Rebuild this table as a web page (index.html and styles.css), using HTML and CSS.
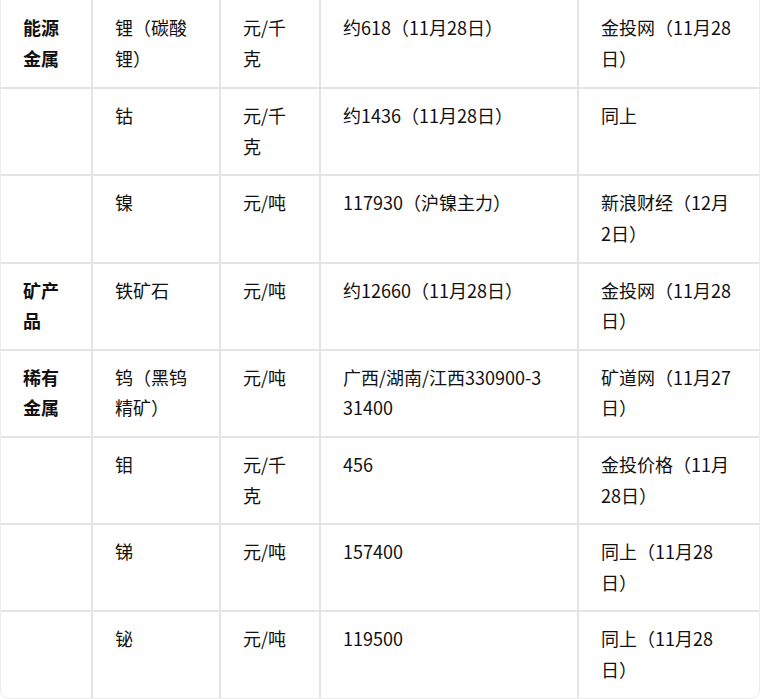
FILE: index.html
```html
<!DOCTYPE html>
<html lang="zh-CN">
<head>
<meta charset="utf-8">
<title>金属价格</title>
<link rel="stylesheet" href="styles.css">
</head>
<body>
<div class="table-wrap">
  <table class="price-table">
    <colgroup>
      <col class="c1"><col class="c2"><col class="c3"><col class="c4"><col class="c5">
    </colgroup>
    <tbody>
      <tr>
        <td class="cat">能源金属</td>
        <td>锂（碳酸锂）</td>
        <td>元/千克</td>
        <td>约618（11月28日）</td>
        <td>金投网（11月28日）</td>
      </tr>
      <tr>
        <td class="cat"></td>
        <td>钴</td>
        <td>元/千克</td>
        <td>约1436（11月28日）</td>
        <td>同上</td>
      </tr>
      <tr>
        <td class="cat"></td>
        <td>镍</td>
        <td>元/吨</td>
        <td>117930（沪镍主力）</td>
        <td>新浪财经（12月2日）</td>
      </tr>
      <tr>
        <td class="cat">矿产品</td>
        <td>铁矿石</td>
        <td>元/吨</td>
        <td>约12660（11月28日）</td>
        <td>金投网（11月28日）</td>
      </tr>
      <tr>
        <td class="cat">稀有金属</td>
        <td>钨（黑钨精矿）</td>
        <td>元/吨</td>
        <td class="num">广西/湖南/江西330900-331400</td>
        <td>矿道网（11月27日）</td>
      </tr>
      <tr>
        <td class="cat"></td>
        <td>钼</td>
        <td>元/千克</td>
        <td>456</td>
        <td>金投价格（11月28日）</td>
      </tr>
      <tr>
        <td class="cat"></td>
        <td>锑</td>
        <td>元/吨</td>
        <td>157400</td>
        <td>同上（11月28日）</td>
      </tr>
      <tr>
        <td class="cat"></td>
        <td>铋</td>
        <td>元/吨</td>
        <td>119500</td>
        <td>同上（11月28日）</td>
      </tr>
    </tbody>
  </table>
</div>
</body>
</html>
```
FILE: styles.css
```css
html, body {
  margin: 0;
  padding: 0;
  background: #ffffff;
}

body {
  font-family: "Noto Sans CJK SC", "Noto Sans", sans-serif;
  font-size: 18px;
  color: #111111;
}

.table-wrap {
  width: 758px;
  border: 1px solid #ececec;
  border-top: none;
  border-radius: 0 0 9px 9px;
  overflow: hidden;
}

.price-table {
  width: 758px;
  table-layout: fixed;
  border-collapse: separate;
  border-spacing: 0;
}

.c1 { width: 92px; }
.c2 { width: 128px; }
.c3 { width: 100px; }
.c4 { width: 258px; }
.c5 { width: 180px; }

.price-table td {
  vertical-align: top;
  padding: 11px 22px 13px 22px;
  line-height: 30.6px;
  border-right: 2px solid #e4e4e4;
  border-bottom: 2px solid #e4e4e4;
  height: 61px;
}

.price-table tr:first-child td {
  padding-top: 12px;
  padding-bottom: 14px;
}

.price-table td:last-child {
  border-right: none;
}

.price-table tr:last-child td {
  border-bottom: none;
}

.cat {
  font-weight: 700;
}

.price-table td.num {
  word-break: break-all;
  padding-right: 32px;
}
```
